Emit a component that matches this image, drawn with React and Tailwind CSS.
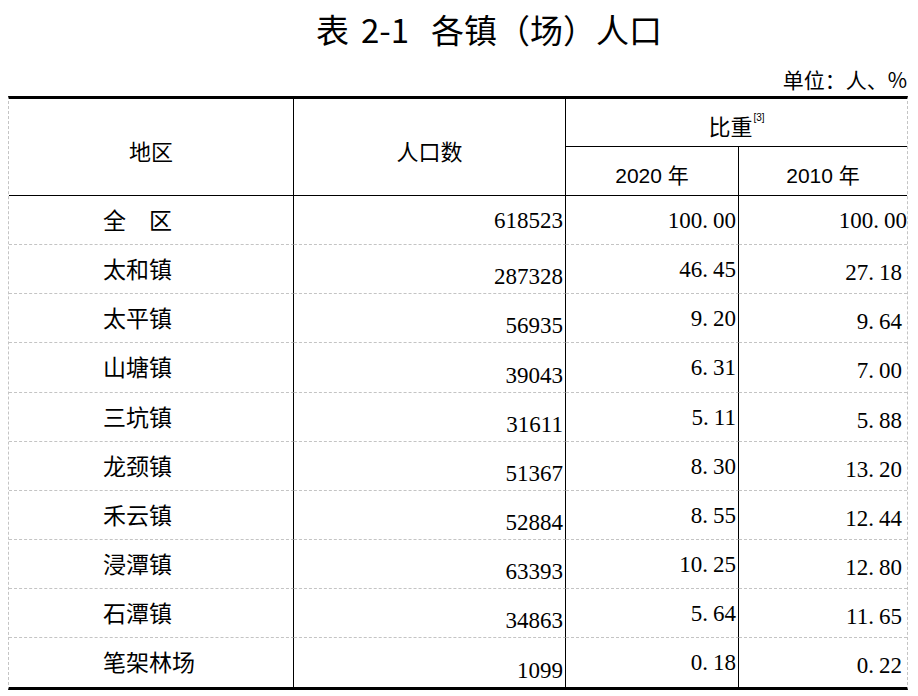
const rows = [
  { name: '全　区', pop: '618523', a: '100.00', b: '100.00', h: 'h-[49px]', full: true },
  { name: '太和镇', pop: '287328', a: '46.45', b: '27.18', h: 'h-[49px]' },
  { name: '太平镇', pop: '56935', a: '9.20', b: '9.64', h: 'h-[49px]' },
  { name: '山塘镇', pop: '39043', a: '6.31', b: '7.00', h: 'h-[50px]' },
  { name: '三坑镇', pop: '31611', a: '5.11', b: '5.88', h: 'h-[49px]' },
  { name: '龙颈镇', pop: '51367', a: '8.30', b: '13.20', h: 'h-[49px]' },
  { name: '禾云镇', pop: '52884', a: '8.55', b: '12.44', h: 'h-[49px]' },
  { name: '浸潭镇', pop: '63393', a: '10.25', b: '12.80', h: 'h-[49px]' },
  { name: '石潭镇', pop: '34863', a: '5.64', b: '11.65', h: 'h-[49px]' },
  { name: '笔架林场', pop: '1099', a: '0.18', b: '0.22', h: 'h-[49px]', last: true },
];

const serif = "font-['Liberation_Serif','Noto_Sans_CJK_SC',serif]";
const cjk = "font-['Noto_Sans_CJK_SC',sans-serif]";

// SimSun-style decimals: the dot takes a half-width cell
function Num({ v }) {
  const [i, d] = v.split('.');
  if (d === undefined) return <span>{i}</span>;
  return (
    <span>
      {i}.<span className="ml-[5px]">{d}</span>
    </span>
  );
}

function Row({ r }) {
  const line = r.last ? '' : 'border-b border-b-[#c4c4c4] [border-bottom-style:dashed]';
  return (
    <div className={`flex ${r.h} text-[23px] leading-none text-black`}>
      <div className={`w-[285px] shrink-0 flex items-center pl-[94px] pb-[2px] border-r border-r-black ${line} ${cjk}`}>
        {r.name}
      </div>
      <div
        className={`w-[272px] shrink-0 flex items-center justify-end pr-[2px] border-r border-r-black ${line} ${serif} ${
          r.full ? '' : 'pt-[15px]'
        }`}
      >
        <Num v={r.pop} />
      </div>
      <div className={`w-[173px] shrink-0 flex items-center justify-end pr-[2px] border-r border-r-black ${line} ${serif}`}>
        <Num v={r.a} />
      </div>
      <div
        className={`w-[168px] shrink-0 flex items-center justify-end ${line} ${serif} ${
          r.full ? 'pr-0 -mr-[2px]' : 'pr-[5px] pt-[6px]'
        }`}
      >
        <Num v={r.b} />
      </div>
    </div>
  );
}

export default function App() {
  return (
    <div className="w-[918px] h-[696px] bg-white overflow-hidden">
      <div className={`h-[60px] flex items-center justify-center pl-[60px] pb-[2px] text-[33px] font-normal leading-none text-black ${cjk}`}>
        <span>表</span>
        <span className="ml-[12px]">2-1</span>
        <span className="ml-[22px]">各镇（场）人口</span>
      </div>

      <div className={`h-[36px] flex items-end justify-end pr-[11px] pb-[6px] text-[21px] leading-none text-black ${cjk}`}>
        单位：人、%
      </div>

      <div className="ml-[8px] w-[900px] border-t-[3px] border-t-black border-b-[3px] border-b-black border-x border-x-[#c4c4c4] [border-left-style:dashed] [border-right-style:dashed]">
        {/* header */}
        <div className={`flex h-[97px] text-[22px] leading-none text-black ${cjk}`}>
          <div className="w-[285px] shrink-0 flex items-center justify-center pt-[6px] border-r border-r-black border-b border-b-black">
            地区
          </div>
          <div className="w-[272px] shrink-0 flex items-center justify-center pt-[6px] border-r border-r-black border-b border-b-black">
            人口数
          </div>
          <div className="flex-1 flex flex-col border-b border-b-black">
            <div className="h-[48px] flex items-center justify-center pt-[4px] border-b border-b-black">
              <span>比重</span>
              <sup className="text-[10px] self-start mt-[20px] ml-[1px] font-['Liberation_Sans',sans-serif]">[3]</sup>
            </div>
            <div className="flex-1 flex font-['Liberation_Sans','Noto_Sans_CJK_SC',sans-serif] text-[21px]">
              <div className="w-[173px] shrink-0 flex items-center justify-center pt-[8px] border-r border-r-black">
                2020 年
              </div>
              <div className="flex-1 flex items-center justify-center pt-[8px]">2010 年</div>
            </div>
          </div>
        </div>

        {rows.map((r) => (
          <Row key={r.name} r={r} />
        ))}
      </div>
    </div>
  );
}
